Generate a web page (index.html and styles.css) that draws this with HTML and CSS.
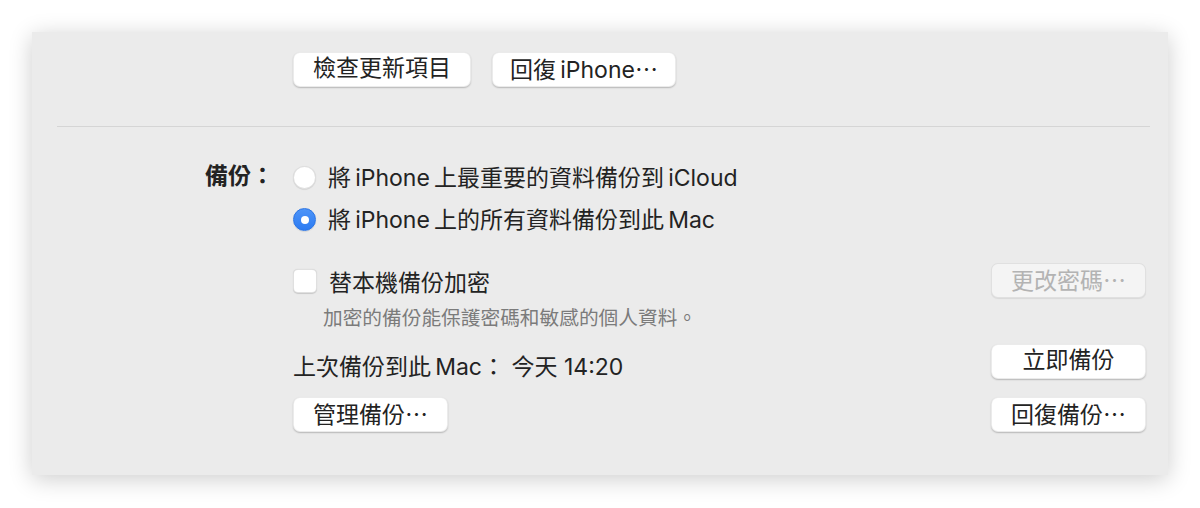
FILE: index.html
```html
<!DOCTYPE html>
<html lang="zh-Hant">
<head>
    <meta charset="UTF-8">
    <title>備份</title>
    <link rel="stylesheet" href="styles.css">
</head>
<body>

    <div class="panel">
        <div class="top-actions">
            <button class="btn btn-check">檢查更新項目</button>
            <button class="btn btn-restore-phone">回復&thinsp;iPhone<span class="dots">…</span></button>
        </div>

        <div class="separator"></div>

        <div class="backup">
            <div class="label">備份：</div>
            <div class="options">
                <div class="radio-row">
                    <span class="radio"></span>
                    <span>將&thinsp;iPhone&thinsp;上最重要的資料備份到&thinsp;iCloud</span>
                </div>
                <div class="radio-row">
                    <span class="radio selected"></span>
                    <span>將&thinsp;iPhone&thinsp;上的所有資料備份到此&thinsp;Mac</span>
                </div>

                <div class="line-row encrypt-row">
                    <div class="check-item">
                        <span class="checkbox"></span>
                        <span>替本機備份加密</span>
                    </div>
                    <button class="btn btn-side" disabled>更改密碼<span class="dots">…</span></button>
                </div>
                <div class="hint">加密的備份能保護密碼和敏感的個人資料。</div>

                <div class="line-row last-row">
                    <div class="last-backup">上次備份到此&thinsp;Mac：&nbsp;今天 14:20</div>
                    <button class="btn btn-side">立即備份</button>
                </div>

                <div class="line-row manage-row">
                    <button class="btn btn-side">管理備份<span class="dots">…</span></button>
                    <button class="btn btn-side">回復備份<span class="dots">…</span></button>
                </div>
            </div>
        </div>
    </div>

</body>
</html>
```

FILE: styles.css
```css
body { margin: 0; background: #ffffff; font-family: "Inter", "Noto Sans CJK TC", sans-serif; color: #232323; }
.panel { margin: 32px; width: 1136px; height: 443px; box-sizing: border-box; background: #ebebeb; padding-top: 20px; box-shadow: 0 4px 22px rgba(0, 0, 0, 0.2); }

.btn { height: 35px; box-sizing: border-box; background: #ffffff; border: 0.5px solid rgba(0, 0, 0, 0.08); border-radius: 7px; box-shadow: 0 1px 1.5px rgba(0, 0, 0, 0.22); font-family: inherit; font-size: 23px; line-height: 30px; color: #232323; padding: 0 0 3px; cursor: pointer; }
.btn:disabled { background: #f4f4f4; color: #b3b3b3; box-shadow: 0 1px 1px rgba(0, 0, 0, 0.08); cursor: default; }
.dots { font-family: "Noto Sans CJK TC", sans-serif; }

.top-actions { display: flex; gap: 21px; padding-left: 261px; }
.btn-check { width: 178px; }
.btn-restore-phone { width: 184px; }

.separator { height: 1px; background: #d5d5d5; margin: 39px 18px 0 25px; }

.backup { display: grid; grid-template-columns: 242px 853px; column-gap: 19px; padding-top: 28px; font-size: 23px; }
.label { font-weight: 700; text-align: right; height: 42px; line-height: 42px; }

.radio-row { display: flex; align-items: center; gap: 12px; height: 42px; }
.radio { width: 23px; height: 23px; box-sizing: border-box; border-radius: 50%; background: #ffffff; border: 0.5px solid rgba(0, 0, 0, 0.12); box-shadow: 0 0.5px 1px rgba(0, 0, 0, 0.15); position: relative; margin-top: 2px; }
.radio.selected { background: linear-gradient(#4d94f8, #2c7bf2); border-color: #2a74e4; }
.radio.selected::after { content: ""; position: absolute; width: 8px; height: 8px; border-radius: 50%; background: #ffffff; left: 7px; top: 7px; }

.line-row { display: flex; justify-content: space-between; align-items: center; height: 35px; }
.encrypt-row { margin-top: 24px; }
.check-item { display: flex; align-items: center; gap: 12px; }
.checkbox { width: 24px; height: 24px; box-sizing: border-box; border-radius: 5px; background: #ffffff; border: 0.5px solid rgba(0, 0, 0, 0.12); box-shadow: 0 0.5px 1px rgba(0, 0, 0, 0.15); }
.btn-side { width: 155px; }

.hint { font-size: 19.7px; color: #7b7b7b; padding-left: 30px; height: 38px; line-height: 40px; }

.last-row { margin-top: 8px; }
.last-backup { padding-top: 6px; }
.manage-row { margin-top: 18px; }
```
